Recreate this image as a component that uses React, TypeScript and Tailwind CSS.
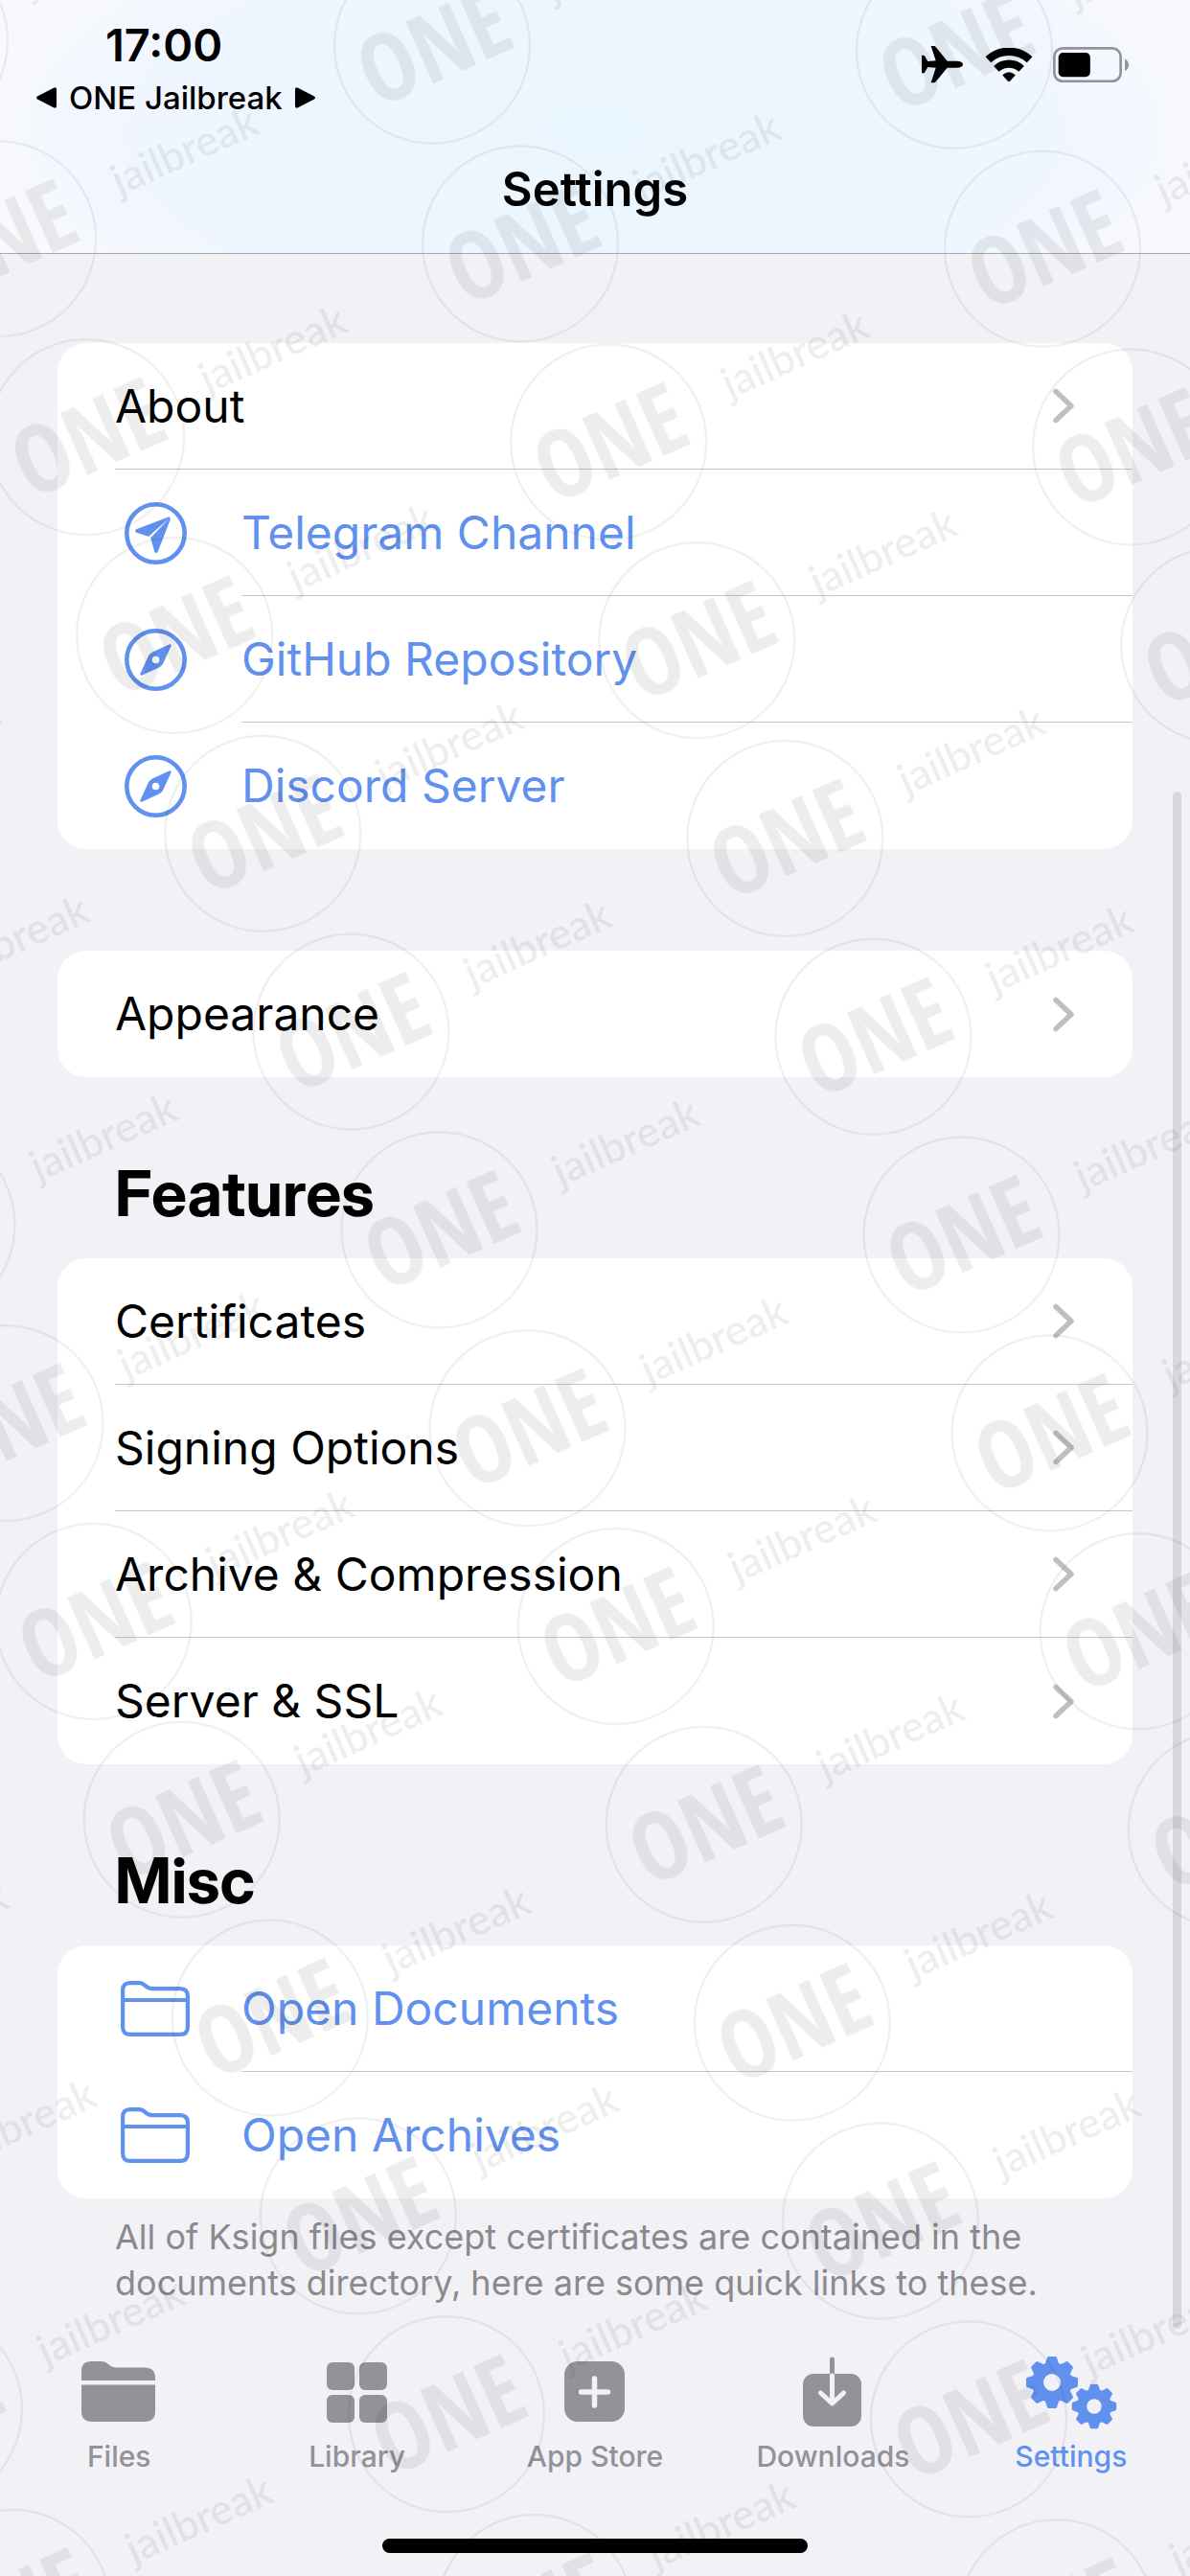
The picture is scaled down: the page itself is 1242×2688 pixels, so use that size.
import React, { useState } from 'react';

interface IconProps {
  className?: string;
}

interface Row {
  label: string;
  icon?: React.FC<IconProps>;
  href?: string;
}

const PlaneIcon: React.FC<IconProps> = ({ className }) => (
  <svg viewBox="36 43 129 115" fill="currentColor" className={className} aria-hidden="true">
    <path d="M165 101c0 7-9 10-19 10h-30L80 155q-2 3-6 3h-9l15-47-25-2-10 17q-1 2-4 2h-5V72h5q3 0 4 2l10 17 25-2-15-46h9q4 0 6 3l36 44h30c10 0 19 4 19 11z" />
  </svg>
);

const WifiIcon: React.FC<IconProps> = ({ className }) => (
  <svg viewBox="236 43 143 107" fill="none" stroke="currentColor" className={className} aria-hidden="true">
    <path d="M243 79.500a95 95 0 0 1 129 0" strokeWidth="25" />
    <path d="M268.500 108a57 57 0 0 1 78 0" strokeWidth="24" />
    <path d="M307.500 149l-18-20q-1-2 1-3 17-13 34 0 2 1 1 3z" fill="currentColor" strokeWidth="2" />
  </svg>
);

const BatteryIcon: React.FC<IconProps> = ({ className }) => (
  <svg viewBox="448 42 236 111" className={className} aria-hidden="true">
    <rect x="452" y="46" width="207" height="103" rx="26" fill="none" stroke="#919397" strokeWidth="8" />
    <rect x="465" y="60" width="99" height="75" rx="14" fill="#000" />
    <path d="M672 79q12 6 12 19t-12 19z" fill="#919397" />
  </svg>
);

const TelegramIcon: React.FC<IconProps> = ({ className }) => (
  <svg viewBox="0 0 65 65" className={className} aria-hidden="true">
    <circle cx="32.5" cy="32.5" r="30.2" fill="none" stroke="currentColor" strokeWidth="4.600" />
    <g fill="currentColor" stroke="currentColor" strokeWidth="1.500" strokeLinejoin="round">
      <path d="M12.500 29L46.500 16 25 35 12.500 31q-1.500-1 0-2z" />
      <path d="M47.300 17.200L34 51.500q-1 1.500-2 0L28 37.500z" />
    </g>
  </svg>
);

const CompassIcon: React.FC<IconProps> = ({ className }) => (
  <svg viewBox="0 0 65 65" className={className} aria-hidden="true">
    <circle cx="32.5" cy="32.5" r="30.2" fill="none" stroke="currentColor" strokeWidth="4.600" />
    <path
      d="M47.500 17.500L39 36q-1 2-3 3L17.500 47.500 26 29q1-2 3-3z"
      fill="currentColor"
      stroke="currentColor"
      strokeWidth="2.500"
      strokeLinejoin="round"
    />
    <circle cx="32.5" cy="32.5" r="3.800" fill="#fff" />
  </svg>
);

const FolderIcon: React.FC<IconProps> = ({ className }) => (
  <svg viewBox="0 0 72 58" fill="none" stroke="currentColor" strokeWidth="4.200" className={className} aria-hidden="true">
    <path d="M2.100 10q0-7.900 7.900-7.900h9.500q3 0 5.500 2.500 3.500 3.500 7 3.500h30q7.900 0 7.900 7.900v32q0 7.900-7.900 7.900H10q-7.900 0-7.900-7.900zM2.100 20h67.800" />
  </svg>
);

const ChevronIcon: React.FC<IconProps> = ({ className }) => (
  <svg viewBox="0 0 24 37" fill="none" stroke="currentColor" strokeWidth="5.500" strokeLinecap="round" strokeLinejoin="round" className={className} aria-hidden="true">
    <path d="M4 3.500l16 15-16 15" />
  </svg>
);

const FilesTabIcon: React.FC<IconProps> = ({ className }) => (
  <svg viewBox="-9 -5 96 76" fill="currentColor" className={className} aria-hidden="true">
    <path d="M0 20V10Q0 0 10 0h11q4 0 7 3T35 6.500h31q11 0 11 11V20zM0 24.500h77V52q0 11-11 11H11Q0 63 0 52z" />
  </svg>
);

const LibraryTabIcon: React.FC<IconProps> = ({ className }) => (
  <svg viewBox="-16 -6 96 76" fill="currentColor" className={className} aria-hidden="true">
    <rect width="29" height="29" rx="6" />
    <rect x="34" width="29" height="29" rx="6" />
    <rect y="34" width="29" height="29" rx="6" />
    <rect x="34" y="34" width="29" height="29" rx="6" />
  </svg>
);

const StoreTabIcon: React.FC<IconProps> = ({ className }) => (
  <svg viewBox="-16 -5 96 76" className={className} aria-hidden="true">
    <rect width="63" height="63" rx="14" fill="currentColor" />
    <path d="M31.500 18v28M17.500 32h28" stroke="#f1f1f6" strokeWidth="5.500" strokeLinecap="round" />
  </svg>
);

const DownloadTabIcon: React.FC<IconProps> = ({ className }) => (
  <svg viewBox="-17 0 96 76" fill="none" strokeLinecap="round" strokeLinejoin="round" className={className} aria-hidden="true">
    <path d="M30.500 3v22" stroke="currentColor" strokeWidth="5" />
    <rect y="18" width="61" height="55" rx="11" fill="currentColor" />
    <path d="M30.500 20v28M18.500 38l12 11 12-11" stroke="#f1f1f6" strokeWidth="5" />
  </svg>
);

const Gear: React.FC<{ x: number; y: number; scale: number }> = ({ x, y, scale }) => (
  <g transform={`translate(${x} ${y}) scale(${scale})`}>
    <circle r="15" fill="none" stroke="currentColor" strokeWidth="12" />
    {[0, 45, 90, 135, 180, 225, 270, 315].map((angle) => (
      <path
        key={angle}
        d="M-6 -18L-3.500 -25.500H3.500L6 -18z"
        transform={`rotate(${angle})`}
        fill="currentColor"
        stroke="currentColor"
        strokeWidth="3"
        strokeLinejoin="round"
      />
    ))}
  </g>
);

const SettingsTabIcon: React.FC<IconProps> = ({ className }) => (
  <svg viewBox="0 0 96 76" className={className} aria-hidden="true">
    <Gear x={28} y={27} scale={1} />
    <Gear x={72} y={52} scale={0.86} />
  </svg>
);

const linkRows: Row[] = [
  { label: 'About' },
  { label: 'Telegram Channel', icon: TelegramIcon, href: '#telegram' },
  { label: 'GitHub Repository', icon: CompassIcon, href: '#github' },
  { label: 'Discord Server', icon: CompassIcon, href: '#discord' },
];

const featureRows: Row[] = [
  { label: 'Certificates' },
  { label: 'Signing Options' },
  { label: 'Archive & Compression' },
  { label: 'Server & SSL' },
];

const miscRows: Row[] = [
  { label: 'Open Documents', icon: FolderIcon, href: '#documents' },
  { label: 'Open Archives', icon: FolderIcon, href: '#archives' },
];

const tabs = [
  { label: 'Files', icon: FilesTabIcon },
  { label: 'Library', icon: LibraryTabIcon },
  { label: 'App Store', icon: StoreTabIcon },
  { label: 'Downloads', icon: DownloadTabIcon },
  { label: 'Settings', icon: SettingsTabIcon },
];

const Card: React.FC<{ rows: Row[] }> = ({ rows }) => (
  <ul className="bg-white rounded-[30px] overflow-hidden">
    {rows.map(({ label, icon: Icon, href }, i) => {
      // the divider starts where the label starts, and the last row has none
      const divider = i < rows.length - 1 ? 'border-b border-[#c6c6c8]' : '';
      return (
        <li key={label}>
          {Icon ? (
            <a href={href} className="flex items-center h-33 pl-15 text-[#6191ee]">
              <span className="flex w-33 shrink-0 pr-12 justify-center">
                <Icon className={Icon === FolderIcon ? 'w-18 shrink-0' : 'w-[65px] shrink-0'} />
              </span>
              <span className={`flex flex-1 items-center h-full ${divider}`}>{label}</span>
            </a>
          ) : (
            <button type="button" className="flex w-full h-33 pl-15 text-left text-black">
              <span className={`flex flex-1 items-center justify-between h-full pr-15 ${divider}`}>
                {label}
                <ChevronIcon className="w-6 text-[#bfbfc1]" />
              </span>
            </button>
          )}
        </li>
      );
    })}
  </ul>
);

const SectionTitle: React.FC<{ children: React.ReactNode }> = ({ children }) => (
  <h2 className="pt-21 pb-[30px] pl-15 font-['Inter_Display','Inter',sans-serif] text-[66px] leading-[75px] font-bold">
    {children}
  </h2>
);

const Watermark = () => (
  <svg className="absolute inset-0 w-full h-full pointer-events-none" aria-hidden="true">
    <defs>
      <pattern
        id="mark"
        x="-120"
        y="-113"
        width="495.8"
        height="226.4"
        patternUnits="userSpaceOnUse"
        patternTransform="translate(451 47.6) rotate(-24)"
      >
        <g transform="translate(120 113)">
          <circle r="102" fill="none" stroke="#000" strokeWidth="2" />
          <text x="1" y="37" textAnchor="middle" fontSize="98" fontWeight="700" fontFamily="'Open Sans Condensed', 'Open Sans', sans-serif">
            ONE
          </text>
          <text x="134" y="11" fontSize="44" fontWeight="500" fontFamily="'Lato Medium', Lato, sans-serif">
            jailbreak
          </text>
        </g>
      </pattern>
    </defs>
    <rect width="100%" height="100%" fill="url(#mark)" opacity="0.07" />
  </svg>
);

export default function App() {
  const [activeTab, setActiveTab] = useState('Settings');

  return (
    <div className="relative flex flex-col min-h-screen overflow-hidden bg-[#f1f1f6] font-[Inter,sans-serif] text-[48px] leading-none">
      <header className="h-[265px] border-b border-[#a9a9af] bg-[#f8f9fc] bg-[radial-gradient(ellipse_52%_100%_at_50%_52%,#eaf6ff_0%,#edf6ff_55%,#f1f6ff_80%,#f8f9fc_100%)]">
        <div className="flex justify-between">
          <div className="flex flex-col pt-5 pl-[38px]">
            <time className="pl-18 text-[47px] leading-[54px] font-semibold">17:00</time>
            <a href="#back" className="flex items-center gap-3 text-[33px] leading-14 font-medium">
              <svg viewBox="0 0 22 22" className="w-[22px]" aria-hidden="true">
                <path d="M1 9.500L18 .7q3-1.200 3 1.800v17q0 3-3 1.800L1 12.500q-2-1.500 0-3z" />
              </svg>
              ONE Jailbreak
              <svg viewBox="0 0 22 22" className="w-[22px]" aria-hidden="true">
                <path d="M21 9.500L4 .7q-3-1.200-3 1.800v17q0 3 3 1.800l17-8.800q2-1.500 0-3z" />
              </svg>
            </a>
          </div>
          <div className="flex items-center h-[37px] mt-[49px] mr-16">
            <PlaneIcon className="w-[43px]" />
            <WifiIcon className="w-12 ml-6" />
            <BatteryIcon className="w-[79px] ml-[22px]" />
          </div>
        </div>
        <h1 className="mt-8 text-center text-[49px] leading-[72px] font-semibold">Settings</h1>
      </header>

      <main className="flex-1 px-15 pt-[93px]">
        <Card rows={linkRows} />
        <div className="mt-[106px]">
          <Card rows={[{ label: 'Appearance' }]} />
        </div>
        <SectionTitle>Features</SectionTitle>
        <Card rows={featureRows} />
        <SectionTitle>Misc</SectionTitle>
        <Card rows={miscRows} />
        <p className="px-15 pt-4 text-[36px] leading-12 text-[#8a8a8e]">
          All of Ksign files except certificates are contained in the documents directory, here are some quick links to these.
        </p>
      </main>

      <nav className="flex h-[190px]">
        {tabs.map(({ label, icon: Icon }) => (
          <button
            key={label}
            type="button"
            onClick={() => setActiveTab(label)}
            className={`flex flex-col flex-1 items-center text-[30px] leading-10 font-medium ${activeTab === label ? 'text-[#6191ee]' : 'text-[#929299]'}`}
          >
            <Icon className="w-24" />
            <span className="mt-2">{label}</span>
          </button>
        ))}
      </nav>
      <div className="w-111 h-[15px] mx-auto mb-6 rounded-full bg-black" />

      <div className="absolute right-[9px] top-[826px] bottom-[258px] w-[9px] rounded-full bg-[#d7d7dc]" />
      <Watermark />
    </div>
  );
}
